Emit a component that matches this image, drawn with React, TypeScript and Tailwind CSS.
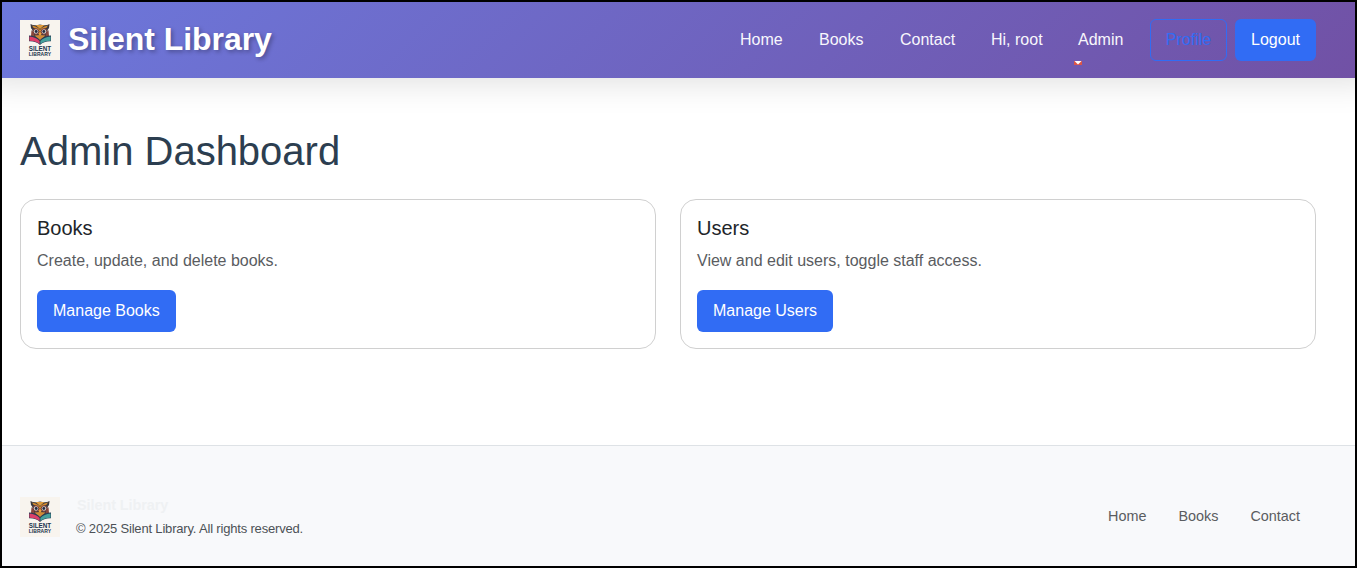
import React from "react";

function Logo() {
  return (
    <svg width="40" height="40" viewBox="0 0 40 40" className="block shrink-0" aria-label="Silent Library">
      <rect width="40" height="40" fill="#f8f4ee" />
      <path d="M10.5 4 Q14 6 20 4.6 Q26 6 29.5 4 Q29.6 8 27.6 10 L28 17 L20 22 L12 17 L12.4 10 Q10.4 8 10.5 4Z" fill="#3b3940" />
      <path d="M12 5.6 Q16 6.6 18.3 8 L20 10 L21.7 8 Q24 6.6 28 5.6 Q27 8.4 24 8.6 L20 12 L16 8.6 Q13 8.4 12 5.6Z" fill="#d38b2d" />
      <path d="M15.5 5h9L20 9z" fill="#dd9a3c" />
      <path d="M11.5 10 L14 14 L14.5 18 L11 16Z M28.5 10 L26 14 L25.5 18 L29 16Z" fill="#8b473b" />
      <circle cx="16" cy="11.5" r="2.8" fill="#c7c9c8" stroke="#803b35" strokeWidth="1" />
      <circle cx="24" cy="11.5" r="2.8" fill="#c7c9c8" stroke="#803b35" strokeWidth="1" />
      <circle cx="16.2" cy="11.5" r="1.4" fill="#252b3e" />
      <circle cx="23.8" cy="11.5" r="1.4" fill="#252b3e" />
      <path d="M20 11.5l1.7 2.2-1.7 2.3-1.7-2.3z" fill="#f0a13b" />
      <path d="M14.5 15.5 Q20 14.6 25.5 15.5 L20 20.5Z" fill="#d08a38" />
      <path d="M9 15.5 Q16 15.6 20 20 Q24 15.6 31 15.5 V21.3 Q24 21 20 25 Q16 21 9 21.3Z" fill="#273c55" />
      <path d="M9.4 16.4 Q16 17 19.6 21 V24 Q15 20.6 9.4 20.7Z" fill="#dc3f6a" />
      <path d="M30.6 16.4 Q24 17 20.4 21 V24 Q25 20.6 30.6 20.7Z" fill="#45a09c" />
      <text x="8.8" y="31" textLength="22.4" lengthAdjust="spacingAndGlyphs" fontFamily="Liberation Sans, sans-serif" fontWeight="700" fontSize="7.2" fill="#20334d">SILENT</text>
      <text x="8.8" y="36" textLength="22.2" lengthAdjust="spacingAndGlyphs" fontFamily="Liberation Sans, sans-serif" fontWeight="700" fontSize="5.8" fill="#20334d">LIBRARY</text>
    </svg>
  );
}

function Card({ title, text, action }: { title: string; text: string; action: string }) {
  return (
    <section className="h-[150px] flex-1 rounded-2xl border border-[#d0d0d0] bg-white p-4">
      <h2 className="text-[20px] font-medium leading-6 text-[#212529]">{title}</h2>
      <p className="mt-2 text-[16px] leading-[25px] text-[#5a5c5f]">{text}</p>
      <button className="mt-[17px] block h-[42px] rounded-md bg-[#316cf4] px-4 text-[16px] font-medium leading-[42px] text-white">
        {action}
      </button>
    </section>
  );
}

export default function App() {
  return (
    <div className="flex h-[568px] w-[1357px] flex-col overflow-hidden border-2 border-black bg-white font-['Liberation_Sans',Arial,sans-serif]">
      <header className="flex h-[76px] shrink-0 items-center justify-between bg-[linear-gradient(135deg,#6c78dc_0%,#7151a5_100%)] pl-[18px] pr-[39px] shadow-[0_-16px_32px_20px_rgba(0,0,0,0.13)]">
        <div className="flex items-center gap-2">
          <Logo />
          <span className="pb-0.5 text-[32px] font-bold leading-[44px] tracking-[-0.05px] text-white [text-shadow:2px_2px_4px_rgba(0,0,0,0.3)]">Silent Library</span>
        </div>
        <nav className="flex items-center text-[16px] font-medium text-[#f8f7fc]">
          <a className="w-[79px]">Home</a>
          <a className="w-[81px]">Books</a>
          <a className="w-[91px]">Contact</a>
          <a className="w-[87px]">Hi, root</a>
          <a className="relative w-[72px]">
            Admin
            <svg className="absolute -left-1 top-[33px]" width="8" height="4" viewBox="0 0 8 4" aria-hidden="true">
              <path d="M0 0h8v4H0z" fill="#dc5447" />
              <path d="M0.5 0h7L4 3.5z" fill="#fff" />
            </svg>
          </a>
          <button className="mr-2 h-[42px] w-[77px] rounded-md border border-[#316cf4] text-[#316cf4]">Profile</button>
          <button className="h-[42px] w-[81px] rounded-md bg-[#316cf4] text-white">Logout</button>
        </nav>
      </header>
      <main className="flex-1 pl-[18px] pr-[39px] pt-[49px]">
        <h1 className="text-[40px] font-medium leading-[48px] text-[#2c3e50]">Admin Dashboard</h1>
        <div className="mt-6 flex gap-6">
          <Card title="Books" text="Create, update, and delete books." action="Manage Books" />
          <Card title="Users" text="View and edit users, toggle staff access." action="Manage Users" />
        </div>
      </main>
      <footer className="flex h-[121px] shrink-0 items-center justify-between border-t border-[#dee2e6] bg-[#f8f9fb] pl-[18px] pr-[55px] pt-[21px]">
        <div className="flex items-center gap-4">
          <Logo />
          <div>
            <p className="pl-px text-[14.4px] font-bold leading-[23px] tracking-[-0.05px] text-[#eff1f3]">Silent Library</p>
            <p className="text-[13px] leading-[23px] tracking-[-0.18px] text-[#4c5156]">© 2025 Silent Library. All rights reserved.</p>
          </div>
        </div>
        <nav className="flex gap-8 pb-0.5 text-[14.4px] leading-6 text-[#5a5c60]">
          <a>Home</a>
          <a>Books</a>
          <a>Contact</a>
        </nav>
      </footer>
    </div>
  );
}
